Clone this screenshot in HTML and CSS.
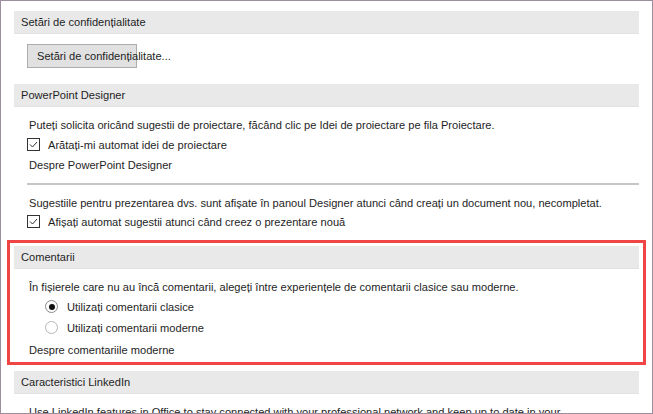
FILE: index.html
```html
<!DOCTYPE html>
<html>
<head>
<meta charset="UTF-8">
<title>Opțiuni PowerPoint</title>
<link rel="stylesheet" href="styles.css">
</head>
<body>
<div class="frame">

  <div class="head">Setări de confidențialitate</div>
  <div class="btnrow"><button class="btn">Setări de confidențialitate...</button></div>

  <div class="head head2">PowerPoint Designer</div>
  <div class="line first">Puteți solicita oricând sugestii de proiectare, făcând clic pe Idei de proiectare pe fila Proiectare.</div>
  <div class="check">
    <span class="box"><svg width="11" height="11" viewBox="0 0 11 11"><path d="M2 5.5 L4.5 8 L9 3" fill="none" stroke="#333" stroke-width="1"/></svg></span>
    Arătați-mi automat idei de proiectare
  </div>
  <div class="line link">Despre PowerPoint Designer</div>
  <div class="sep"></div>
  <div class="line tight">Sugestiile pentru prezentarea dvs. sunt afișate în panoul Designer atunci când creați un document nou, necompletat.</div>
  <div class="check">
    <span class="box"><svg width="11" height="11" viewBox="0 0 11 11"><path d="M2 5.5 L4.5 8 L9 3" fill="none" stroke="#333" stroke-width="1"/></svg></span>
    Afișați automat sugestii atunci când creez o prezentare nouă
  </div>

  <div class="marked">
    <div class="head">Comentarii</div>
    <div class="line first">În fișierele care nu au încă comentarii, alegeți între experiențele de comentarii clasice sau moderne.</div>
    <div class="radio r1"><span class="dot on"></span>Utilizați comentarii clasice</div>
    <div class="radio r2"><span class="dot"></span>Utilizați comentarii moderne</div>
    <div class="line link">Despre comentariile moderne</div>
  </div>

  <div class="head head3">Caracteristici LinkedIn</div>
  <div class="line first">Use LinkedIn features in Office to stay connected with your professional network and keep up to date in your</div>

</div>
</body>
</html>
```

FILE: styles.css
```css
body {
    margin: 0;
    background: #fff;
    font-family: "Liberation Sans", Arial, sans-serif;
    font-size: 11.1px;
    color: #1e1e1e;
}
.frame {
    height: 414px;
    box-sizing: border-box;
    border: 1px solid #9d8e9d;
    padding: 10px 13px 0 13px;
    overflow: hidden;
}
.head {
    background: #e9e9e9;
    border-bottom: 1px solid #e2e2e2;
    height: 22px;
    line-height: 22px;
    padding-left: 7px;
}
.head2 {
    margin-top: 16px;
}
.head3 {
    margin-top: 6px;
}
.btnrow {
    padding: 10px 0 0 13px;
}
.btn {
    width: 110px;
    height: 24px;
    background: #e1e1e1;
    border: 1px solid #adadad;
    padding: 0 0 0 9px;
    text-align: left;
    white-space: nowrap;
    overflow: visible;
    font: inherit;
    color: #1e1e1e;
}
.line {
    height: 19px;
    line-height: 19px;
    padding-left: 15px;
    white-space: nowrap;
}
.line.first {
    margin-top: 9px;
}
.line.tight {
    height: 17px;
    line-height: 17px;
}
.link {
    height: 23px;
    line-height: 23px;
}
.check {
    display: flex;
    align-items: center;
    height: 19px;
    padding-left: 13px;
    white-space: nowrap;
}
.box {
    width: 11px;
    height: 11px;
    border: 1px solid #333;
    margin-right: 8px;
    display: flex;
}
.sep {
    height: 2px;
    background: #c6c6c6;
    margin: 6px 0 10px 13px;
}
.marked {
    margin: 9px -7px 0 -7px;
    border: 3px solid #ef4545;
    padding: 3px 4px 0 4px;
}
.radio {
    display: flex;
    align-items: center;
    padding-left: 31px;
    white-space: nowrap;
}
.r1 {
    height: 19px;
}
.r2 {
    height: 23px;
}
.dot {
    width: 11px;
    height: 11px;
    border: 1px solid #b5b5b5;
    border-radius: 50%;
    margin-right: 9px;
    display: flex;
    align-items: center;
    justify-content: center;
}
.dot.on {
    border-color: #8a8a8a;
}
.dot.on::after {
    content: "";
    width: 6px;
    height: 6px;
    border-radius: 50%;
    background: #111;
}
```
